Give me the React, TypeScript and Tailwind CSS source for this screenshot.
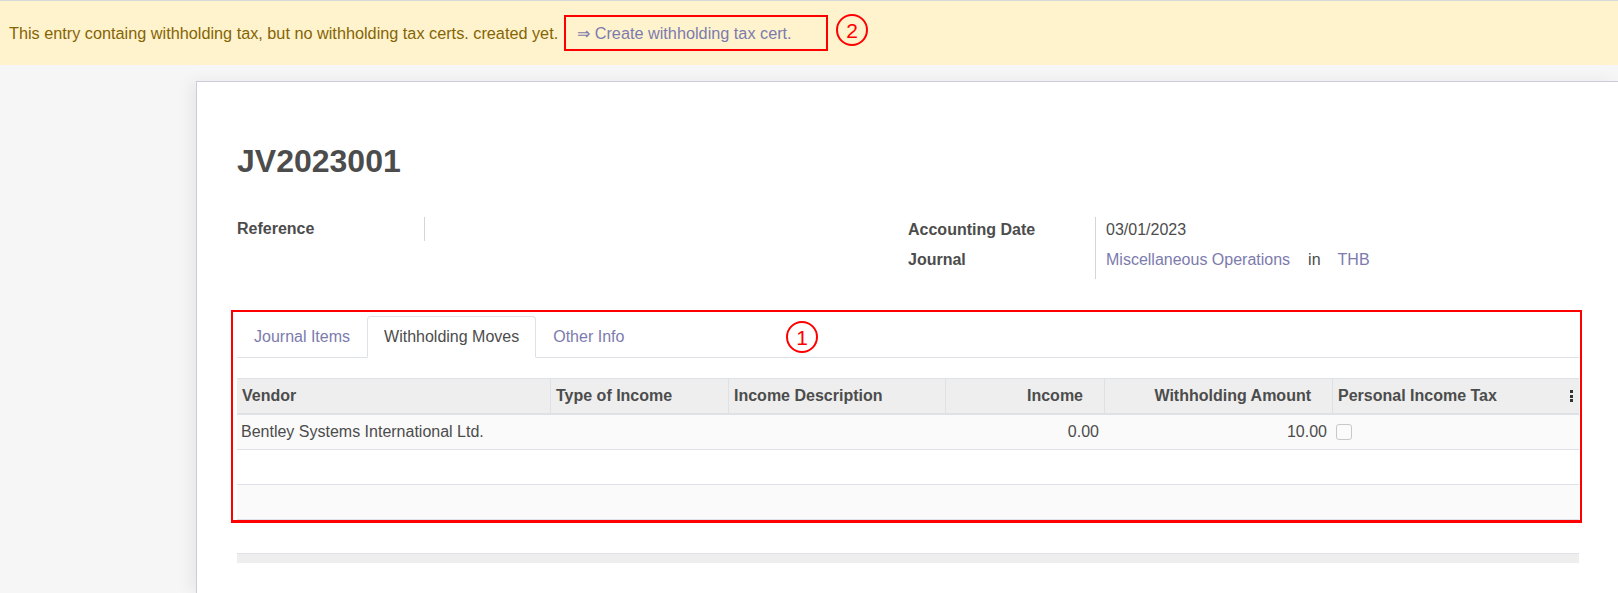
const columns = [
  { label: "Vendor", width: "w-[313px]", align: "left" },
  { label: "Type of Income", width: "w-[178px]", align: "left" },
  { label: "Income Description", width: "w-[217px]", align: "left" },
  { label: "Income", width: "w-[159px]", align: "right" },
  { label: "Withholding Amount", width: "w-[228px]", align: "right" },
  { label: "Personal Income Tax", width: "flex-1", align: "left" },
];

const rows = [
  { vendor: "Bentley Systems International Ltd.", income: "0.00", amount: "10.00", filled: true },
  null,
  null,
];

function Marker({ n, className }: { n: string; className: string }) {
  return (
    <div
      className={`absolute flex h-[32px] w-[32px] items-center justify-center rounded-full border-2 border-[#ff0000] text-[21px] leading-none text-[#ff0000] ${className}`}
    >
      {n}
    </div>
  );
}

export default function App() {
  return (
    <div className="relative min-h-screen overflow-hidden bg-[#f6f6f6] font-['Liberation_Sans',Arial,sans-serif] text-[16px] text-[#4c4c4c]">
      {/* WARNING BANNER */}
      <div className="flex h-[65px] items-center border-t border-[#d8d8d8] bg-[#fff3cd] pl-[9px] text-[#856404]">
        <span className="text-[16.25px] leading-[24px]">
          This entry containg withholding tax, but no withholding tax certs. created yet.
        </span>
        <div className="ml-[6px] flex h-[36px] w-[264px] items-center border-2 border-[#ff0000] pl-[11px]">
          <span className="text-[16.25px] text-[#7c7bad]">⇒ Create withholding tax cert.</span>
        </div>
      </div>

      {/* SHEET */}
      <div className="ml-[196px] mt-[16px] min-h-[512px] border-l border-t border-[#cbcbdc] bg-white pl-[40px] pr-[39px] pt-[60px] shadow-[-6px_0_14px_rgba(0,0,0,0.06)]">
        <h1 className="text-[32px] font-bold leading-[38px] text-[#4c4c4c]">JV2023001</h1>

        <div className="mt-[37px] grid grid-cols-2">
          <div className="flex items-start">
            <div className="w-[187px] font-bold leading-[24px]">Reference</div>
            <div className="h-[24px] border-l border-[#d6d6d6]" />
          </div>
          <div className="flex">
            <div className="w-[187px] pb-[7px] font-bold leading-[24px]">
              <div className="mt-px">Accounting Date</div>
              <div className="mt-[6px]">Journal</div>
            </div>
            <div className="border-l border-[#d6d6d6] pl-[10px] leading-[24px]">
              <div className="mt-px">03/01/2023</div>
              <div className="mt-[6px] flex">
                <span className="text-[#7c7bad]">Miscellaneous Operations</span>
                <span className="ml-[18px] mr-[17px]">in</span>
                <span className="text-[#7c7bad]">THB</span>
              </div>
            </div>
          </div>
        </div>

        {/* NOTEBOOK */}
        <div className="mt-[37px] flex border-b border-[#dee2e6]">
          <div className="-mb-px flex h-[42px] items-center border border-transparent px-4 text-[#7c7bad]">
            Journal Items
          </div>
          <div className="-mb-px flex h-[42px] items-center rounded-t-[4px] border border-[#dee2e6] border-b-white bg-white px-4">
            Withholding Moves
          </div>
          <div className="-mb-px flex h-[42px] items-center border border-transparent px-4 text-[#7c7bad]">
            Other Info
          </div>
        </div>

        {/* TABLE */}
        <div className="mt-[20px]">
          <div className="flex h-[37px] border-b-2 border-t border-[#dee2e6] bg-[#eeeeee] font-bold">
            {columns.map((c, i) => (
              <div
                key={c.label}
                className={`flex items-center ${c.width} ${i > 0 ? "border-l border-[#dee2e6]" : ""} ${
                  c.align === "right" ? "justify-end pr-[21px]" : "pl-[5px]"
                }`}
              >
                {c.label}
                {i === columns.length - 1 && (
                  <div className="ml-auto mr-[6px] flex flex-col gap-[1.5px]">
                    <span className="h-[3px] w-[3px] bg-[#333]" />
                    <span className="h-[3px] w-[3px] bg-[#333]" />
                    <span className="h-[3px] w-[3px] bg-[#333]" />
                  </div>
                )}
              </div>
            ))}
          </div>
          {rows.map((r, i) => (
            <div
              key={i}
              className={`flex h-[35px] items-center border-b border-[#dee2e6] ${i % 2 === 0 ? "bg-[#fafafa]" : "bg-white"}`}
            >
              {r && (
                <>
                  <div className="w-[313px] pl-[4px]">{r.vendor}</div>
                  <div className="w-[178px]" />
                  <div className="w-[217px]" />
                  <div className="w-[159px] pr-[5px] text-right">{r.income}</div>
                  <div className="w-[228px] pr-[5px] text-right">{r.amount}</div>
                  <div className="flex-1 pl-[4px]">
                    <div className="h-[16px] w-[16px] rounded-[3px] border border-[#c8c8c8] bg-[#fbfbfb]" />
                  </div>
                </>
              )}
            </div>
          ))}
        </div>

        <div className="mt-[33px] h-[10px] border-t border-[#dee2e6] bg-[#eeeeee]" />
      </div>

      {/* ANNOTATIONS */}
      <div className="absolute left-[231px] top-[310px] h-[213px] w-[1351px] border-2 border-b-[3px] border-[#ff0000]" />
      <Marker n="1" className="left-[786px] top-[321px]" />
      <Marker n="2" className="left-[836px] top-[14px]" />
    </div>
  );
}
